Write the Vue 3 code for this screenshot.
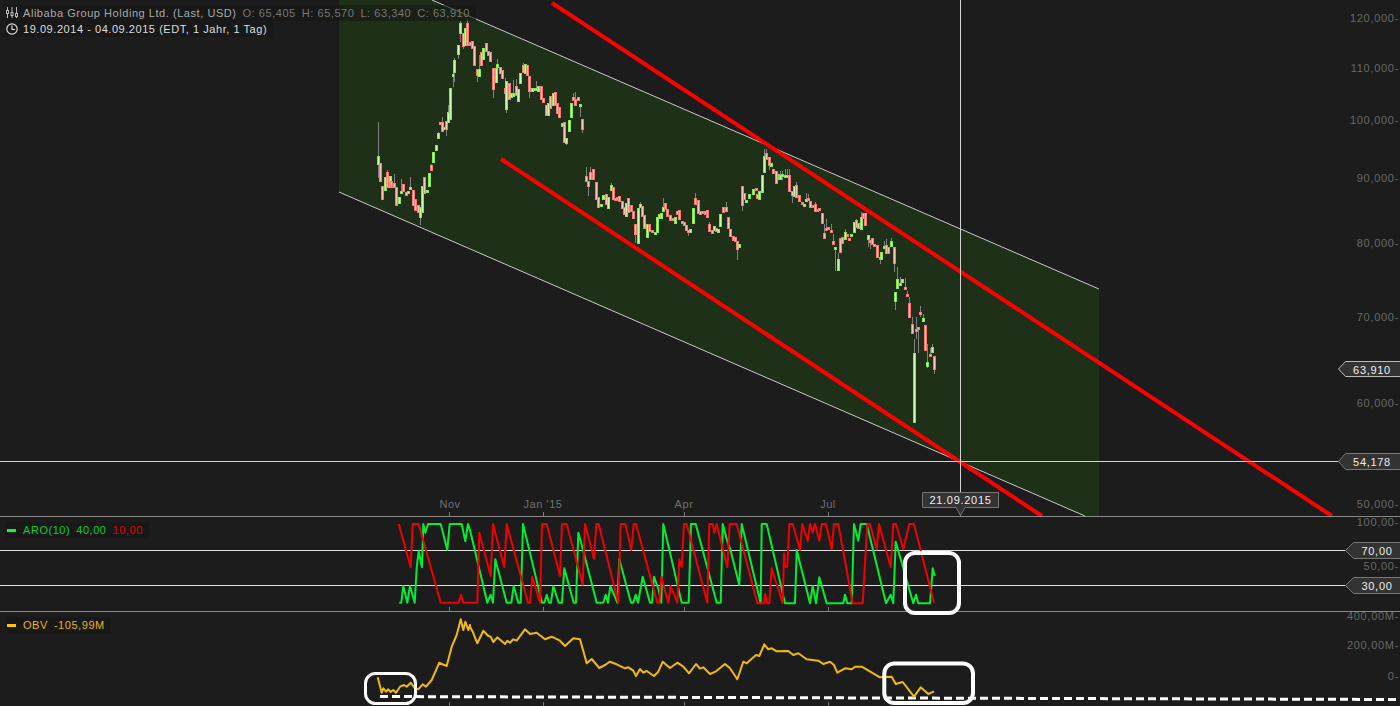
<script setup>
const mapPts = (ox, oy, s) =>
  s.trim().split(/\s+/).map((p) => {
    const [x, y] = p.split(',').map(Number)
    return `${(ox + x / 3).toFixed(1)},${(oy + y / 3).toFixed(1)}`
  })

const redPts = [
  ...mapPts(0, 510, '1196,42 1232,172 1238,42 1256,42 1322,278 1376,278 1383,254 1390,278'),
  ...mapPts(470, 510, '0,278 22,278 28,68 62,198 69,42 103,172 110,42 174,278 180,278 187,200 210,278 216,42 230,42 270,198 276,42 290,42 338,224 345,42 372,146 379,42 386,42 445,278 452,42 466,42 484,120 491,42 498,42 562,278 568,278 574,200 595,278 602,228 622,278 628,148 635,172 642,42 650,42 712,278 718,42 728,42 733,68 740,42 772,172 779,42'),
  ...mapPts(730, 490, '0,102 20,102 82,340 102,340 105,312 112,340 118,340 125,235 158,340 162,190 165,230 172,230 178,102 188,102 210,180 217,102 233,152 240,102 248,128 255,102 268,152 275,102 288,102 305,178 312,102 325,102 368,340 375,340 398,340 412,102 420,102 440,178 447,102 482,232 490,102 498,102 520,178 538,102 552,102 612,338'),
].join(' ')

const greenPts = [
  ...mapPts(0, 510, '1198,278 1204,278 1210,228 1222,278 1230,228 1244,278 1250,172 1256,124 1266,172 1270,42 1276,68 1284,42 1322,42 1342,120 1349,42 1385,42 1396,94 1404,42'),
  ...mapPts(470, 510, '0,60 52,278 62,254 69,278 76,148 110,278 124,278 131,228 145,278 152,278 159,42 216,278 223,278 230,254 237,278 243,278 250,228 266,278 276,278 283,175 311,278 318,278 325,68 332,94 380,278 400,278 407,254 414,278 421,228 442,278 448,148 483,278 490,278 497,254 504,278 518,200 540,278 546,278 552,200 566,240 574,278 580,42 635,278 656,278 663,42 677,42 740,278 752,278 758,42 772,94'),
  ...mapPts(730, 490, '0,175 28,285 35,102 85,310 92,340 95,102 110,102 165,340 172,340 195,340 200,180 240,340 248,288 258,340 268,262 290,340 340,340 345,314 352,340 365,340 372,102 385,152 392,102 410,102 468,340 482,314 490,340 497,155 550,340 558,314 565,340 600,340 608,235 614,258'),
].join(' ')

const obvPts = [
  ...mapPts(0, 510, '1133,502 1145,548 1150,535 1158,545 1165,538 1172,546 1180,540 1188,548 1200,530 1212,525 1220,530 1232,518 1245,535 1255,538 1268,523 1278,530 1295,510 1318,458 1325,462 1340,468 1355,410 1370,375 1382,328 1390,360 1396,335 1405,360 1410,345'),
  ...mapPts(470, 510, '0,350 8,365 22,400 40,362 55,378 62,380 70,396 82,382 105,402 112,392 120,398 130,388 140,392 165,358 180,372 200,368 225,388 245,380 270,392 285,408 310,385 330,388 350,460 365,447 388,474 405,465 420,455 440,463 465,475 475,472 490,482 498,498 510,477 520,488 530,483 552,498 565,485 578,455 600,474 622,458 640,470 657,490 678,462 690,476 700,472 720,492 738,484 765,462 780,475'),
  ...mapPts(730, 490, '0,535 22,568 40,515 50,520 78,495 88,498 103,463 115,478 125,475 140,484 175,483 190,495 205,490 230,508 265,512 280,522 300,515 312,525 322,548 345,535 365,538 375,530 395,530 450,562 485,560 497,582 518,576 552,620 572,592 595,612 612,604'),
].join(' ')

// [x, bodyTop, bodyBottom, wickTop, wickBottom, kind] in 3x crop coordinates of each group
const groupA = [
  [25,438,462,336,505,'g'],[31,460,512,0,0,'r'],[37,528,568,0,0,'r'],[45,500,540,0,0,'g'],[52,487,530,480,0,'r'],[59,498,530,0,0,'g'],[64,514,532,0,0,'r'],[72,520,530,492,0,'r'],[79,530,585,0,0,'r'],[86,562,578,0,0,'g'],[93,544,546,508,0,'g'],[100,522,543,0,0,'r'],[107,546,555,0,0,'r'],[114,542,546,0,0,'g'],[121,532,538,502,0,'g'],[128,540,586,0,0,'r'],[135,568,600,0,0,'r'],[143,586,605,0,0,'r'],[150,590,622,0,645,'g'],[155,528,605,0,0,'g'],[163,502,548,0,0,'r'],[170,540,545,0,0,'g'],[176,490,528,0,0,'g'],[184,465,480,462,0,'r'],[190,426,456,0,0,'g'],[197,405,419,0,0,'g'],[203,370,383,365,0,'g'],[209,335,338,0,0,'r'],[216,335,362,320,0,'r'],[222,352,358,0,0,'g'],[229,332,358,0,378,'r'],[235,305,335,285,0,'g'],[241,233,327,0,0,'g'],[248,192,196,170,230,'g'],[252,150,186,145,215,'g'],[265,105,131,0,148,'g'],[271,38,68,34,95,'g'],[278,68,108,68,118,'r'],[285,54,104,0,0,'g'],[292,40,105,28,0,'r'],[300,95,105,0,0,'r'],[307,92,115,0,0,'r'],[313,108,165,0,0,'r'],[321,177,195,0,215,'r'],[328,178,197,135,0,'g'],[334,126,165,0,0,'r'],[340,115,147,0,0,'g'],[349,98,122,0,0,'r'],[355,122,135,0,0,'r'],[361,126,152,0,0,'r'],[370,174,236,0,265,'r'],[377,174,215,0,0,'g'],[382,162,170,148,0,'g'],[390,170,188,0,0,'r'],[397,180,205,0,0,'r'],[404,235,250,205,0,'r'],[409,213,296,0,310,'g'],[417,220,268,0,0,'r'],[423,250,260,0,0,'g'],[430,250,258,210,0,'g'],[438,228,255,208,0,'r'],[445,238,272,0,0,'g'],[451,190,218,0,0,'g'],[460,165,186,158,0,'r'],[466,162,190,0,0,'g'],[472,165,195,0,0,'r'],[478,198,244,0,265,'r'],[485,235,242,0,0,'g'],[492,235,238,0,0,'g'],[499,235,240,213,0,'g'],[505,228,242,0,0,'g'],[512,228,268,0,0,'r'],[520,265,275,0,0,'r'],[528,285,316,0,0,'r'],[535,278,315,0,0,'g'],[541,258,295,0,0,'r'],[548,250,285,0,0,'g'],[555,246,285,0,0,'r'],[562,280,310,0,0,'r'],[568,290,320,0,0,'r'],[575,340,348,0,0,'g'],[582,336,395,0,0,'r'],[589,385,400,0,405,'g'],[597,330,362,0,0,'g'],[604,280,320,0,0,'g'],[610,260,270,250,0,'r'],[616,268,284,245,0,'r'],[624,262,270,0,0,'r'],[631,283,288,0,320,'g'],[637,328,358,0,368,'r'],
]
const groupB = [
  [317,348,362,320,0,'r'],[323,362,378,0,408,'r'],[330,336,356,322,0,'r'],[339,326,358,0,0,'r'],[349,366,416,0,0,'r'],[355,410,440,0,0,'r'],[362,432,437,0,0,'g'],[370,406,416,0,0,'g'],[377,402,432,0,0,'r'],[385,410,443,0,0,'g'],[392,376,390,368,0,'g'],[398,382,418,0,0,'r'],[405,415,420,0,0,'r'],[411,412,420,0,0,'r'],[418,408,422,0,0,'r'],[425,423,445,0,0,'r'],[432,440,462,0,0,'r'],[438,430,468,0,0,'g'],[445,415,455,0,0,'r'],[452,436,452,0,0,'r'],[460,453,473,0,0,'r'],[466,491,521,0,550,'r'],[474,445,548,0,0,'g'],[480,432,440,425,0,'g'],[487,438,468,0,0,'r'],[493,466,504,0,0,'r'],[502,492,532,0,0,'g'],[508,492,514,0,0,'r'],[515,510,516,0,0,'r'],[524,515,518,0,0,'g'],[530,471,515,0,0,'g'],[537,462,474,0,0,'g'],[544,460,475,0,0,'g'],[550,440,452,415,0,'g'],[556,428,448,0,0,'r'],[562,448,468,0,0,'r'],[570,465,480,0,0,'r'],[577,474,480,0,0,'r'],[584,470,490,0,0,'g'],[592,452,462,0,0,'r'],[598,450,476,0,0,'r'],[605,482,488,0,0,'r'],[612,486,496,0,0,'r'],[618,494,510,0,0,'r'],[625,510,516,0,527,'r'],[631,508,515,0,0,'g'],[640,444,488,0,0,'g'],[646,415,431,400,0,'r'],[653,420,460,0,0,'r'],[660,452,462,0,0,'r'],[667,452,458,0,0,'r'],[675,452,462,0,0,'r'],[682,450,472,0,0,'r'],[688,492,514,485,0,'r'],[695,510,518,0,0,'r'],[701,498,510,0,0,'g'],[708,503,514,0,0,'r'],[715,508,515,0,0,'g'],[721,462,497,0,0,'g'],[730,442,455,0,0,'r'],[737,441,452,425,0,'r'],[743,472,505,0,0,'r'],[751,508,528,0,0,'r'],[758,528,540,0,0,'r'],[764,530,543,0,0,'r'],[770,544,566,0,600,'r'],[777,553,562,0,0,'g'],[785,378,434,0,452,'r'],[791,400,416,0,0,'r'],[799,420,422,0,0,'g'],[806,403,414,0,0,'g'],[820,388,402,0,0,'g'],[827,384,390,0,0,'r'],[832,402,414,0,0,'r'],[838,392,416,0,0,'g'],[847,346,396,0,0,'g'],
]
const groupC = [
  [72,78,125,58,0,'g'],[79,70,88,58,0,'r'],[87,82,104,0,120,'r'],[94,100,107,0,0,'g'],[100,118,130,0,0,'r'],[108,124,160,0,0,'r'],[116,132,146,0,0,'g'],[121,135,148,122,0,'g'],[127,132,136,122,150,'g'],[136,136,138,118,0,'g'],[142,136,138,118,0,'g'],[148,136,182,118,0,'r'],[157,183,195,0,218,'r'],[162,168,198,0,0,'g'],[169,166,200,157,0,'r'],[178,195,212,0,0,'r'],[185,216,222,0,0,'r'],[191,222,226,0,0,'g'],[197,207,212,190,0,'g'],[205,205,209,192,0,'r'],[211,214,230,0,0,'r'],[218,224,230,0,0,'r'],[226,222,242,216,0,'r'],[232,238,244,0,0,'r'],[238,235,240,0,0,'r'],[247,250,278,0,0,'r'],[253,310,323,283,0,'r'],[259,293,300,266,0,'r'],[265,292,297,0,0,'r'],[274,300,302,282,0,'r'],[280,334,342,312,0,'r'],[286,351,356,0,422,'g'],[295,387,420,370,0,'g'],[301,324,365,0,0,'r'],[307,322,338,0,0,'r'],[316,307,326,297,0,'g'],[322,311,315,0,0,'r'],[328,324,330,0,0,'r'],[334,313,317,0,0,'g'],[343,277,305,0,0,'g'],[349,270,292,266,0,'r'],[355,280,295,0,0,'r'],[364,260,298,246,0,'g'],[370,250,265,0,0,'r'],[376,250,284,0,0,'r'],[385,316,326,0,350,'g'],[391,330,332,0,358,'r'],[397,325,341,0,0,'r'],[403,342,346,0,0,'r'],[412,346,380,0,0,'r'],[419,381,386,0,403,'r'],[424,367,386,0,0,'g'],[433,349,354,332,0,'g'],[438,346,368,326,0,'r'],[445,350,370,0,0,'r'],[454,334,347,324,0,'g'],[461,352,400,0,425,'r'],[466,487,512,0,540,'g'],[472,448,475,412,0,'g'],[481,458,462,442,0,'g'],[487,448,456,0,0,'g'],[494,472,476,445,0,'r'],[502,492,495,484,0,'r'],[508,520,560,500,0,'r'],[515,583,610,560,0,'r'],[523,670,875,628,0,'g'],[529,596,602,560,627,'r'],[535,592,598,0,668,'r'],[541,546,548,528,562,'r'],[550,565,574,552,0,'g'],[556,586,660,0,0,'r'],[562,695,707,642,714,'g'],[571,672,677,655,0,'r'],[577,652,667,642,0,'g'],[583,678,718,0,731,'r'],
]

const toCandles = (list, ox, oy) =>
  list.map(([x, top, bot, wt, wb, kind]) => {
    const px = Math.round(ox + x / 3)
    const y1 = Math.round(oy + top / 3)
    const y2 = Math.max(Math.round(oy + bot / 3), y1 + 2)
    return {
      x: px,
      y: y1,
      h: y2 - y1,
      wt: wt ? oy + wt / 3 : y1,
      wb: wb ? oy + wb / 3 : y2,
      kind,
    }
  })

const candles = [
  ...toCandles(groupA, 370, 10),
  ...toCandles(groupB, 480, 60),
  ...toCandles(groupC, 740, 130),
]

const priceLabels = [
  ['120,000-', 18],['110,000-', 68],['100,000-', 120],['90,000-', 178],
  ['80,000-', 243],['70,000-', 317],['60,000-', 403],['50,000-', 504],
]
const months = [['Nov', 450],["Jan '15", 543],['Apr', 684],['Jul', 828]]
const tickXs = [449.5, 543.5, 684.5, 828.5]
</script>

<template>
  <div class="chart">
    <section class="pane main">
      <svg class="plot" width="1400" height="516" viewBox="0 0 1400 516">
        <polygon class="channel" points="339,0 432,0 1099,289 1099,516 1085,516 339,192" />
        <line class="edge" x1="432" y1="0" x2="1099" y2="289" />
        <line class="edge" x1="339" y1="192" x2="1085" y2="516" />
        <line class="trend" x1="552" y1="3" x2="1332" y2="516" />
        <line class="trend" x1="501" y1="159" x2="1042" y2="516" />
        <g v-for="(c, i) in candles" :key="i">
          <line class="wick" :x1="c.x + 0.5" :x2="c.x + 0.5" :y1="c.wt" :y2="c.wb" />
          <rect :class="c.kind === 'g' ? 'up' : 'down'" :x="c.x - 0.5" :y="c.y + 0.5" width="2" :height="c.h" />
        </g>
        <line class="cross" x1="960.5" y1="0" x2="960.5" y2="516" />
        <line class="cross" x1="0" y1="461.5" x2="1340" y2="461.5" />
        <text v-for="m in months" :key="m[0]" class="month" :x="m[1]" y="507.5" text-anchor="middle">{{ m[0] }}</text>
        <line v-for="x in tickXs" :key="x" class="tick" :x1="x" :x2="x" y1="512" y2="516" />
        <text v-for="p in priceLabels" :key="p[0]" class="axis" x="1399" :y="p[1] + 4" text-anchor="end">{{ p[0] }}</text>
        <path class="tag bright" d="M1400,361.5 H1345.5 L1338.5,369 L1345.5,376.5 H1400" />
        <text class="tag-text" x="1372" y="374" text-anchor="middle">63,910</text>
        <path class="tag" d="M1400,453.5 H1345.5 L1338.5,461.5 L1345.5,469.5 H1400" />
        <text class="tag-text" x="1372" y="466" text-anchor="middle">54,178</text>
        <path class="tag" d="M922.5,492.5 H998.5 V507.5 H965 L960.5,515.5 L956,507.5 H922.5 Z" />
        <text class="tag-text" x="960.5" y="504" text-anchor="middle">21.09.2015</text>
      </svg>
      <div class="legend">
        <div class="legend-row">
          <svg class="icon" width="12" height="12" viewBox="0 0 12 12">
            <path class="icon-line" d="M1.5,0 V11 M6,0 V11 M10.5,0 V11" />
            <rect class="icon-body" x="0.5" y="3.5" width="2" height="3" />
            <rect class="icon-body" x="5" y="5.5" width="2" height="3" />
            <rect class="icon-body" x="9.5" y="6.5" width="2" height="3" />
          </svg>
          <span class="name">Alibaba Group Holding Ltd. (Last, USD)</span>
          <span class="ohlc">O: 65,405</span>
          <span class="ohlc">H: 65,570</span>
          <span class="ohlc">L: 63,340</span>
          <span class="ohlc">C: 63,910</span>
        </div>
        <div class="legend-row">
          <svg class="icon" width="12" height="12" viewBox="0 0 12 12">
            <circle class="clock" cx="6" cy="6" r="5.2" />
            <path class="clock" d="M6,2.5 V6.5 H9" />
          </svg>
          <span class="range">19.09.2014 - 04.09.2015 (EDT, 1 Jahr, 1 Tag)</span>
        </div>
      </div>
    </section>

    <section class="pane aroon">
      <svg class="plot" width="1400" height="94" viewBox="0 517 1400 94">
        <line v-for="x in tickXs" :key="x" class="tick" :x1="x" :x2="x" y1="607" y2="611" />
        <line class="level" x1="0" y1="550.5" x2="1346" y2="550.5" />
        <line class="level" x1="0" y1="585.5" x2="1346" y2="585.5" />
        <polyline class="series green" :points="greenPts" />
        <polyline class="series red" :points="redPts" />
        <text class="axis" x="1399" y="526" text-anchor="end">100,00-</text>
        <text class="axis" x="1399" y="570" text-anchor="end">50,00-</text>
        <path class="tag" d="M1400,542.5 H1353.5 L1345.5,550.5 L1353.5,558.5 H1400" />
        <text class="tag-text" x="1377" y="555" text-anchor="middle">70,00</text>
        <path class="tag" d="M1400,577.5 H1353.5 L1345.5,585.5 L1353.5,593.5 H1400" />
        <text class="tag-text" x="1377" y="590" text-anchor="middle">30,00</text>
      </svg>
      <div class="legend">
        <div class="legend-row ind">
          <i class="swatch green-bg"></i>
          <span class="aro-name">ARO(10)</span>
          <span class="aro-name">40,00</span>
          <span class="aro-red">10,00</span>
        </div>
      </div>
    </section>

    <section class="pane obv">
      <svg class="plot" width="1400" height="94" viewBox="0 612 1400 94">
        <line v-for="x in tickXs" :key="x" class="tick" :x1="x" :x2="x" y1="702" y2="706" />
        <line class="dash" x1="380" y1="696.5" x2="1400" y2="699.5" />
        <polyline class="series gold" :points="obvPts" />
        <rect class="mark" x="905" y="553" width="54" height="60" rx="10" />
        <rect class="mark thin" x="365.5" y="673.5" width="50" height="30" rx="10" />
        <rect class="mark" x="884.3" y="663.5" width="88.7" height="39.5" rx="10" />
        <text class="axis" x="1399" y="619.5" text-anchor="end">400,00M-</text>
        <text class="axis" x="1399" y="649" text-anchor="end">200,00M-</text>
        <text class="axis" x="1399" y="680" text-anchor="end">0-</text>
      </svg>
      <div class="legend">
        <div class="legend-row ind">
          <i class="swatch gold-bg"></i>
          <span class="obv-text">OBV</span>
          <span class="obv-text">-105,99M</span>
        </div>
      </div>
    </section>
  </div>
</template>

<style>
html, body { background: #1c1c1c; overflow: hidden; }
</style>

<style scoped>
.chart {
  width: 1400px;
  height: 706px;
  display: flex;
  flex-direction: column;
  background: #1c1c1c;
  font-family: "Liberation Sans", Arial, sans-serif;
  font-size: 11px;
  letter-spacing: 0.55px;
  overflow: hidden;
}
.pane { position: relative; flex: none; }
.main { height: 516px; }
.aroon { height: 94px; border-top: 1px solid #888; }
.obv { height: 94px; border-top: 1px solid #888; }
.plot { display: block; overflow: visible; }
.channel { fill: #1f3018; }
.edge { stroke: #c8c8c8; stroke-width: 1; }
.trend { stroke: #ff0000; stroke-width: 4; }
.wick { stroke: #808080; stroke-width: 1; shape-rendering: crispEdges; }
.up { fill: #c8fba8; stroke: #84e84c; stroke-width: 1; shape-rendering: crispEdges; }
.down { fill: #ffc0ba; stroke: #ff7672; stroke-width: 1; shape-rendering: crispEdges; }
.cross { stroke: #d4d4d4; stroke-width: 1; shape-rendering: crispEdges; }
.tick { stroke: #777; stroke-width: 1; shape-rendering: crispEdges; }
.level { stroke: #e0e0e0; stroke-width: 1; shape-rendering: crispEdges; }
.month { fill: #707070; font-size: 11px; }
.axis { fill: #686868; font-size: 11px; letter-spacing: 0.7px; }
.tag { fill: #333; stroke: #777; stroke-width: 1; }
.tag.bright { stroke: #bbb; }
.tag-text { fill: #eee; font-size: 11px; letter-spacing: 0.7px; }
.series { fill: none; stroke-width: 2; stroke-linejoin: round; }
.green { stroke: #00ee33; }
.red { stroke: #f00000; }
.gold { stroke: #f0bc00; }
.mark { fill: none; stroke: #fff; stroke-width: 4; }
.mark.thin { stroke-width: 3; }
.dash { stroke: #fff; stroke-width: 3; stroke-dasharray: 8 4; }
.legend { position: absolute; left: 5px; top: 5px; display: flex; flex-direction: column; align-items: flex-start; }
.legend-row {
  display: flex;
  align-items: center;
  gap: 6px;
  height: 16px;
  padding-left: 1px;
  padding-right: 6px;
  background: rgba(22, 22, 22, 0.6);
  white-space: nowrap;
}
.legend-row.ind { padding-left: 2px; padding-right: 6px; }
.icon { flex: none; margin-right: -1px; }
.icon-line { stroke: #bbb; stroke-width: 1; fill: none; }
.icon-body { fill: #1c1c1c; stroke: #bbb; stroke-width: 1; }
.clock { fill: none; stroke: #ddd; stroke-width: 1.2; }
.name { color: #a8a8a8; }
.ohlc { color: #777; }
.range { color: #dcdcdc; }
.swatch { display: block; width: 9px; height: 3px; margin-right: 1px; }
.green-bg { background: #00ff33; }
.gold-bg { background: #ffc800; }
.aro-name { color: #00d030; }
.aro-red { color: #e00000; }
.obv-text { color: #e8b800; }
</style>
